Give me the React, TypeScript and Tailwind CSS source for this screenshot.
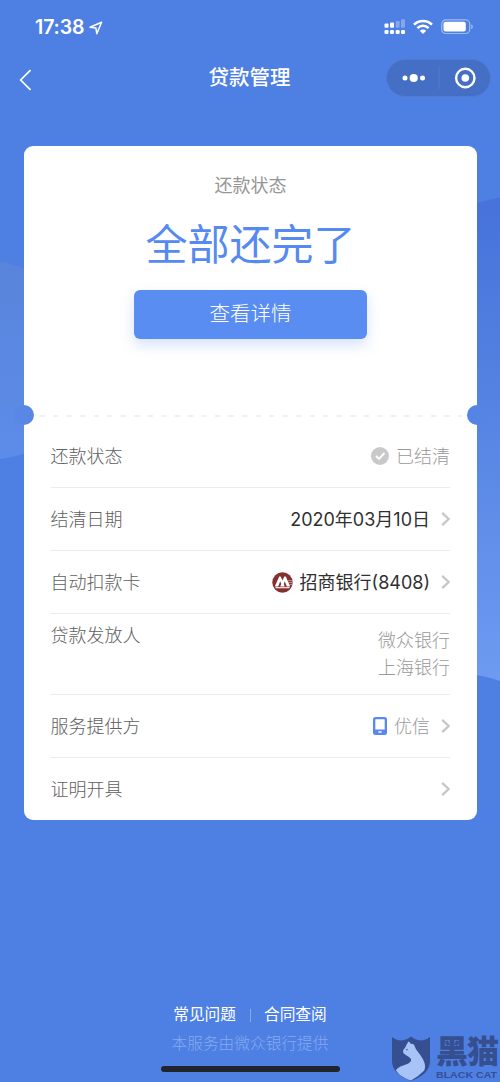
import type { ReactNode } from "react";

function Chevron() {
  return (
    <svg className="ml-[11px] h-4 w-[9px] shrink-0" viewBox="0 0 9 16" fill="none">
      <path d="M1.2 1.8 7.7 8 1.2 14.2" stroke="#c6c6c6" strokeWidth="2.3" />
    </svg>
  );
}

function Row({ label, height, last, children }: { label: string; height: string; last?: boolean; children?: ReactNode }) {
  return (
    <div className={`flex items-center justify-between ${height} ${last ? "" : "border-b border-[#ececec]"}`}>
      <span className="text-[#606060]">{label}</span>
      <div className="flex items-center">{children}</div>
    </div>
  );
}

function Backdrop() {
  return (
    <svg className="absolute inset-0 h-[1082px] w-[500px]" viewBox="0 0 500 1082" fill="none">
      <defs>
        <linearGradient id="leftGlow" x1="0" y1="262" x2="0" y2="460" gradientUnits="userSpaceOnUse">
          <stop stopColor="#5984db" />
          <stop offset="1" stopColor="#5c8ce9" />
        </linearGradient>
        <linearGradient id="rightGlow" x1="0" y1="197" x2="0" y2="682" gradientUnits="userSpaceOnUse">
          <stop stopColor="#4672da" />
          <stop offset="0.45" stopColor="#5584e3" />
          <stop offset="1" stopColor="#6e9bf1" />
        </linearGradient>
      </defs>
      <path d="M0 262Q14 264 30 271V452Q14 457 0 459Z" fill="url(#leftGlow)" />
      <path d="M500 197.500Q486 200 470 205V674Q486 676 500 681Z" fill="url(#rightGlow)" />
    </svg>
  );
}

function StatusBar() {
  return (
    <div className="flex h-[54px] items-center justify-between pl-[35px] pr-[26px]">
      <div className="flex items-center gap-[5px] pt-px text-white">
        <span className="font-[Inter] text-[19.5px] leading-none font-semibold tracking-[-0.1px]">17:38</span>
        <svg className="h-[14px] w-[14px]" viewBox="0 0 14 14" fill="none">
          <path d="M12.600 1.200 1 6.300l5.900.7.900 5.700z" stroke="white" strokeWidth="1.500" strokeLinejoin="round" />
        </svg>
      </div>
      <div className="flex items-center">
        <svg className="h-4 w-[22px]" viewBox="0 0 22 16" fill="white">
          <rect x="0.500" y="4.500" width="4" height="4.300" rx="1" />
          <rect x="6" y="3.500" width="4" height="5.300" rx="1" />
          <rect x="11.700" y="2" width="4" height="6.800" rx="1" opacity=".3" />
          <rect x="17" y="0.200" width="4" height="8.600" rx="1" opacity=".3" />
          <rect x="0.500" y="11" width="4" height="4" rx="1.200" />
          <rect x="6" y="11" width="4" height="4" rx="1.200" />
          <rect x="11.700" y="11" width="4" height="4" rx="1.200" />
          <rect x="17" y="11" width="4" height="4" rx="1.200" />
        </svg>
        <svg className="ml-[7px] h-4 w-5" viewBox="0 0 20 16" fill="none" stroke="white" strokeWidth="2.500">
          <path d="M1 5.700a12.700 12.700 0 0 1 18 0" />
          <path d="M4.400 9.200a7.900 7.900 0 0 1 11.200 0" />
          <path d="M10 15 6.800 11.800a4.500 4.500 0 0 1 6.400 0Z" fill="white" stroke="none" />
        </svg>
        <svg className="ml-2 h-4 w-[33px]" viewBox="0 0 33 16" fill="none">
          <rect x="0.700" y="0.900" width="28" height="13.600" rx="4" stroke="white" strokeOpacity=".45" strokeWidth="1.200" />
          <rect x="2.500" y="2.800" width="22.300" height="9.800" rx="2" fill="white" />
          <path d="M30.200 5.200v5q1.700-.7 1.700-2.500t-1.700-2.500" fill="white" fillOpacity=".45" />
        </svg>
      </div>
    </div>
  );
}

function NavBar() {
  return (
    <header className="grid h-[48px] grid-cols-3 items-center pr-[9px] pl-[19px]">
      <svg className="mt-[3px] h-[22px] w-[13px]" viewBox="0 0 13 22" fill="none">
        <path d="M11.500 1.200 1.700 11l9.800 9.800" stroke="white" strokeWidth="1.700" />
      </svg>
      <h1 className="-ml-[11px] text-center text-[20.500px] leading-none font-medium whitespace-nowrap text-white">贷款管理</h1>
      <div className="flex h-[38px] w-[105px] items-center justify-self-end rounded-full border border-[#527bd0] bg-[#456fc4]">
        <svg className="h-9 w-[103px]" viewBox="0 0 103 36" fill="white">
          <circle cx="18" cy="18" r="2.500" />
          <circle cx="26.700" cy="18" r="4.100" />
          <circle cx="35.500" cy="18" r="2.500" />
          <path d="M52 7v22" stroke="#527cd0" strokeWidth="1" />
          <circle cx="78.300" cy="18" r="9.200" fill="none" stroke="white" strokeWidth="2.400" />
          <circle cx="78.300" cy="18" r="3.800" />
        </svg>
      </div>
    </header>
  );
}

function BankLogo() {
  return (
    <svg className="mr-[7px] h-[21px] w-[21px]" viewBox="0 0 21 21">
      <circle cx="10.500" cy="10.500" r="10.200" fill="#85302f" />
      <path d="M2.800 14.500 7.200 4.500h1.500l1.800 4 1.800-4h1.500l4.400 10h-3.400l-2-5.300-1 2.800 1 2.500H8.200l1-2.500-1-2.800-2 5.300Z" fill="white" />
      <path d="M3.500 15.700h14" stroke="white" strokeWidth="1.100" />
      <path d="M15.700 8.600h5M16.500 10.500h4M17.400 12.400h3" stroke="white" strokeOpacity=".65" strokeWidth=".7" />
    </svg>
  );
}

function LoanCard() {
  return (
    <main className="relative mt-[44px] ml-6 h-[674px] w-[453px] rounded-[9px] bg-white">
      <section className="flex h-[270px] flex-col items-center pt-[30px]">
        <p className="text-[18px] leading-5 text-[#969696]">还款状态</p>
        <p className="mt-[24px] text-[42px] leading-[50px] text-[#568af0]">全部还完了</p>
        <button className="mt-[20px] h-[49px] w-[233px] rounded-[6px] bg-[#598df2] pb-px text-[20.500px] font-light text-white shadow-[0_6px_14px_rgba(89,141,242,0.25)]">
          查看详情
        </button>
      </section>
      <svg className="absolute top-[269px] left-[15px] h-[2px] w-[424px]" viewBox="0 0 424 2">
        <path d="M.500 1h422" stroke="#dfe3f0" strokeWidth="1" strokeDasharray="5.500 8" />
      </svg>
      <span className="absolute top-[259px] -left-[10px] h-5 w-5 rounded-full bg-[#5987e5]" />
      <span className="absolute top-[259px] -right-[10px] h-5 w-5 rounded-full bg-[#5584e4]" />
      <section className="pr-[27px] pl-[26.500px] text-[18px] leading-[27px] font-light">
        <div className="h-[9px]" />
        <Row label="还款状态" height="h-[63px]">
          <svg className="mr-[7px] h-[18px] w-[18px]" viewBox="0 0 18 18" fill="none">
            <circle cx="9" cy="9" r="9" fill="#c9c9c9" />
            <path d="m5 9 3 3 5.500-6" stroke="white" strokeWidth="1.900" />
          </svg>
          <span className="text-[#999]">已结清</span>
        </Row>
        <Row label="结清日期" height="h-[63px]">
          <span className="font-normal text-[#303030]">2020年03月10日</span>
          <Chevron />
        </Row>
        <Row label="自动扣款卡" height="h-[63px]">
          <BankLogo />
          <span className="font-normal text-[#303030]">招商银行(8408)</span>
          <Chevron />
        </Row>
        <div className="flex h-[81px] justify-between border-b border-[#ececec]">
          <span className="pt-[8px] text-[#606060]">贷款发放人</span>
          <div className="pt-[13px] text-right text-[#999]">
            <p>微众银行</p>
            <p>上海银行</p>
          </div>
        </div>
        <Row label="服务提供方" height="h-[63px]">
          <svg className="mr-[7px] h-[18px] w-[14px]" viewBox="0 0 14 18">
            <rect width="14" height="18" rx="2.500" fill="#5a87f0" />
            <rect x="2.300" y="2.200" width="9.400" height="10.200" rx=".5" fill="white" />
            <rect x="5.200" y="14.200" width="3.600" height="1.500" rx=".7" fill="white" />
          </svg>
          <span className="text-[#999]">优信</span>
          <Chevron />
        </Row>
        <Row label="证明开具" height="h-[62px]" last>
          <Chevron />
        </Row>
      </section>
    </main>
  );
}

function Watermark() {
  return (
    <div className="absolute top-[1036px] left-[391px] flex h-[46px] w-[109px] items-start text-[#354f91]">
      <svg className="h-[46px] w-[40px] shrink-0" viewBox="0 0 40 46">
        <path d="M1 1q5 4 11 3.300Q16 4 20 .500q4 3.500 8 3.800Q34 5 39 1v24q0 13-19 20Q1 38 1 25Z" fill="currentColor" />
        <path d="M17.500 5.500q1.700 1 2.200 2.300l2.200.2q1.300.3 2 2.700c1 3 2.600 4.300 5.400 8.300 4.200 6 6 10.800 3.900 15.500Q28 40 20 44.500 9 41 5 34.500c2-5.500 16-5.500 15-11-.5-3-5.500-3.500-7.500-6.500-.8-1-.5-3.200 1-4.500 1.500-1.600 2-4.500 4-7Z" fill="#a8c3f7" />
        <path d="m14.600 13.800 2.300-1.100-.7 1.700z" fill="#354f91" />
      </svg>
      <div className="ml-[5px] flex w-[64px] flex-col">
        <span className="text-[32px] leading-[32px] font-black tracking-[-1px] whitespace-nowrap">黑猫</span>
        <svg className="mt-[2px] h-[10px] w-[61px]" viewBox="0 0 61 10">
          <text x="0" y="8.300" textLength="61" lengthAdjust="spacingAndGlyphs" fill="currentColor" fontFamily="Liberation Sans" fontSize="9.500" fontWeight="700">BLACK CAT</text>
        </svg>
      </div>
    </div>
  );
}

export default function App() {
  return (
    <div className="relative h-[1082px] w-[500px] overflow-hidden bg-[#4e80e4] font-[Inter,'Noto_Sans_CJK_SC',sans-serif]">
      <Backdrop />
      <div className="relative">
        <StatusBar />
        <NavBar />
        <LoanCard />
        <footer className="mt-[183px] flex flex-col items-center text-[15.700px] leading-6 text-white">
          <div className="flex items-center">
            <span>常见问题</span>
            <span className="mx-[13.500px] h-[13px] w-px bg-[#85a8ee]" />
            <span>合同查阅</span>
          </div>
          <p className="mt-[5px] font-light text-[#86a9ef]">本服务由微众银行提供</p>
          <div className="mt-[10px] h-[6px] w-[179px] rounded-full bg-[#20242b]" />
        </footer>
      </div>
      <Watermark />
    </div>
  );
}
